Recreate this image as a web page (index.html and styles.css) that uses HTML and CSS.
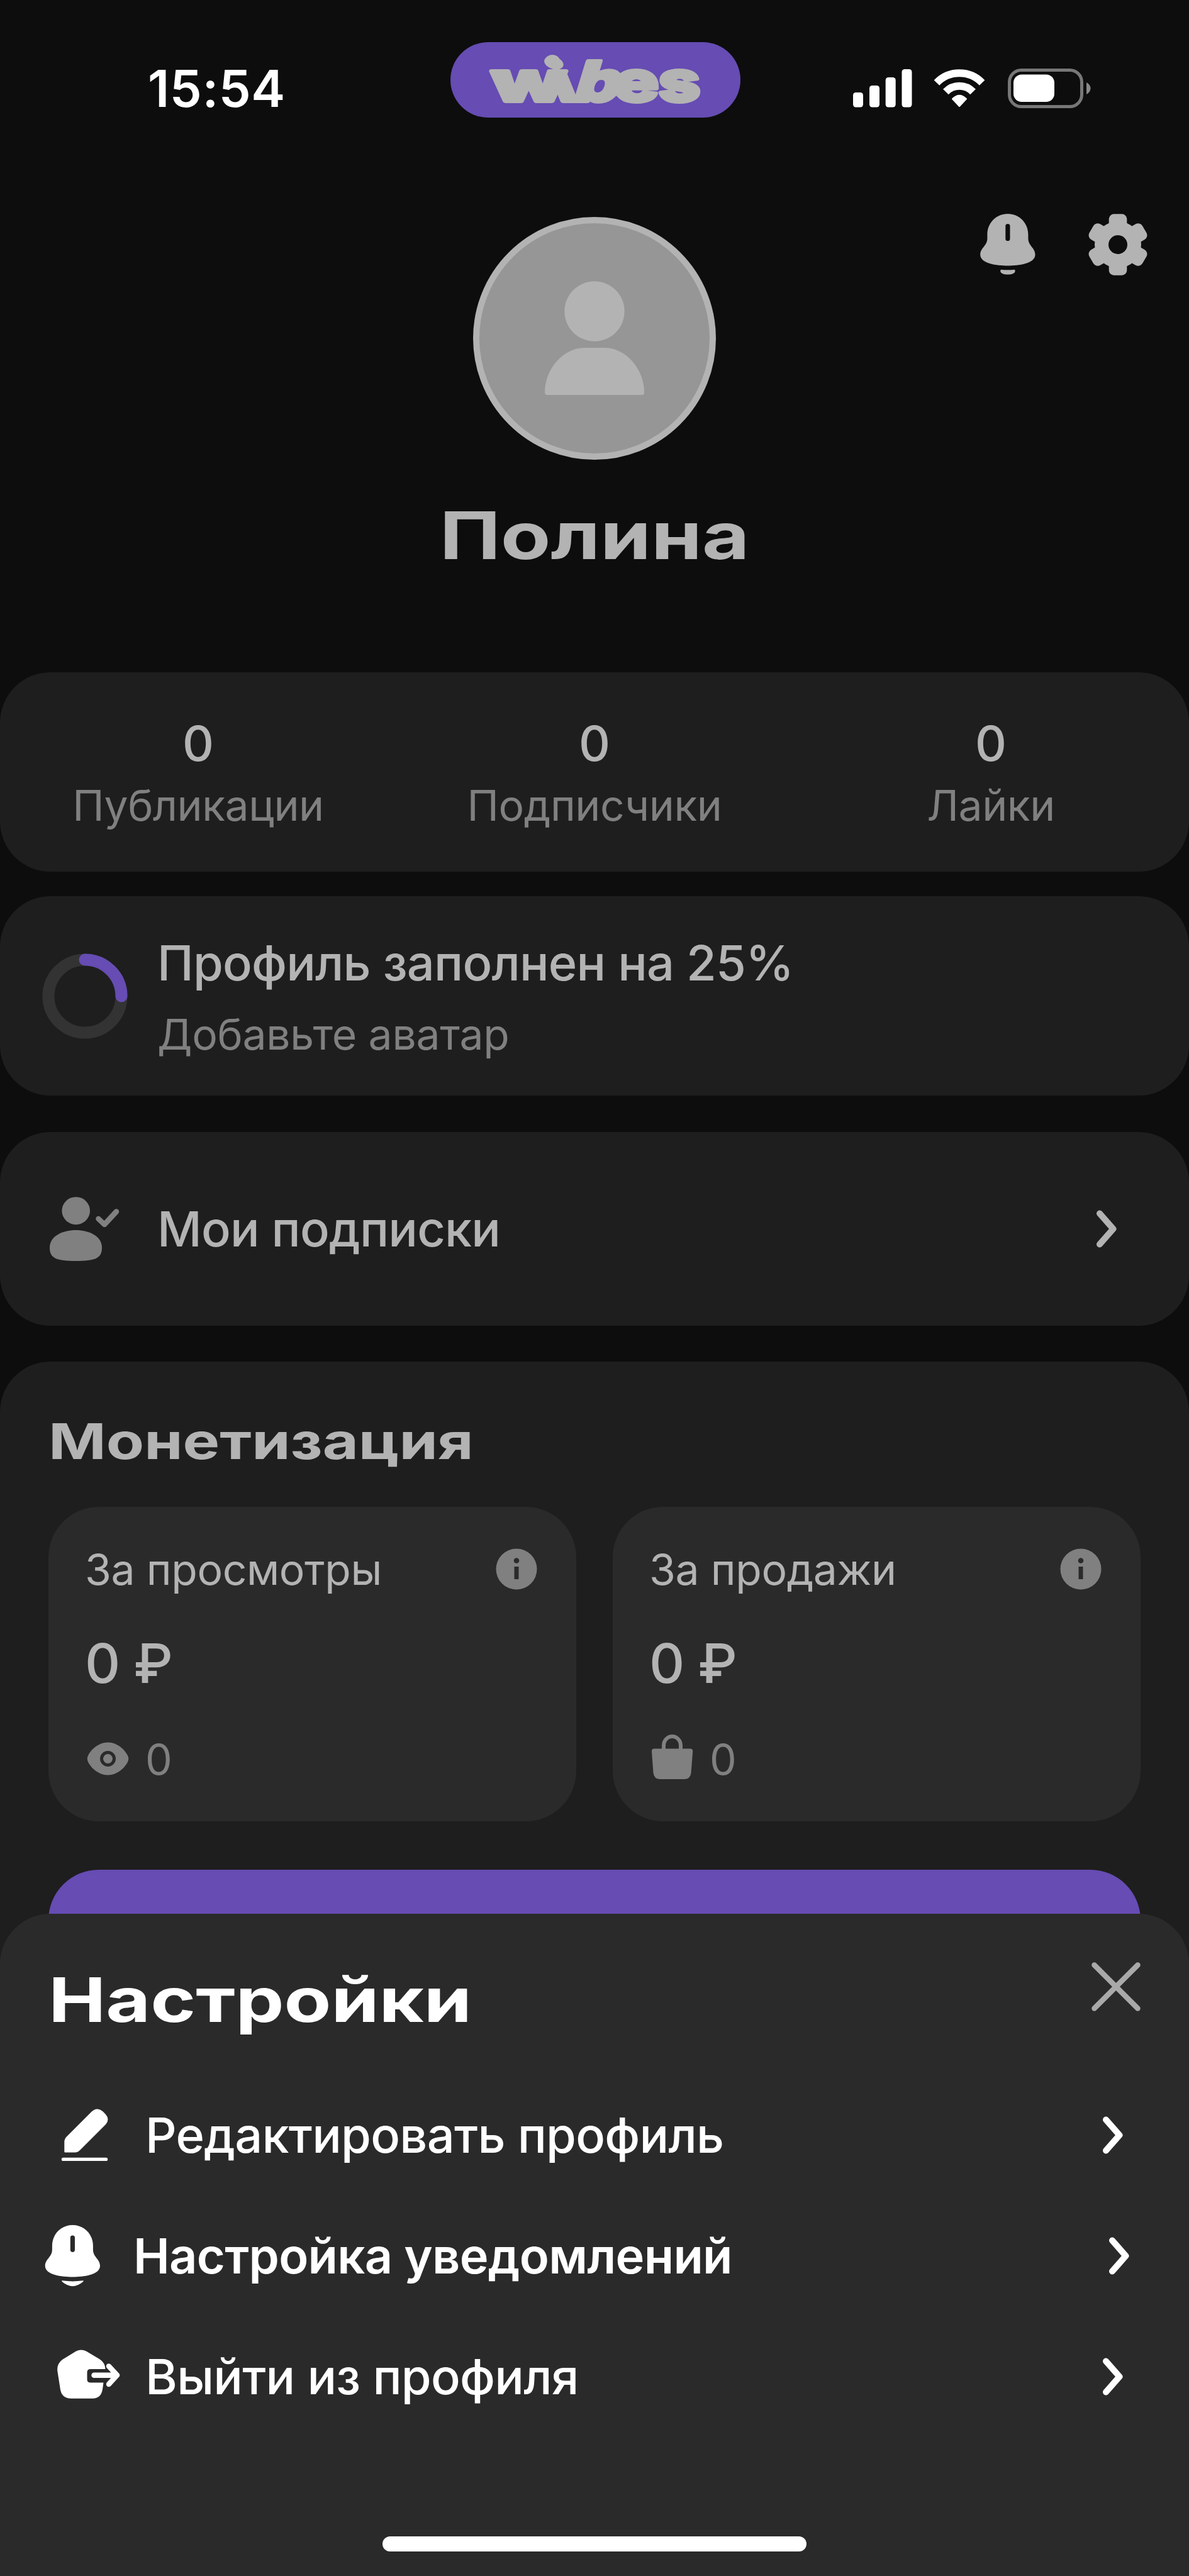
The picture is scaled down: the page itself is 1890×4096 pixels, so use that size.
FILE: index.html
```html
<!DOCTYPE html>
<html lang="ru">
<head>
    <meta charset="UTF-8">
    <meta name="viewport" content="width=device-width, initial-scale=1.0">
    <title>Wibes - Профиль</title>
    <link rel="stylesheet" href="styles.css">
</head>
<body>
    <div class="screen">
        <header class="status-bar">
            <div class="time">15:54</div>
            <div class="logo-pill">
                <svg class="logo-text" viewBox="0 0 461 120" width="461" height="120">
                    <text x="65" y="94" textLength="119" lengthAdjust="spacingAndGlyphs">w</text>
                    <text transform="translate(172 94) skewX(22)" textLength="34" lengthAdjust="spacingAndGlyphs">i</text>
                    <ellipse cx="162" cy="30" rx="9" ry="7"/>
                    <text transform="translate(193 94) skewX(-17)" textLength="72" lengthAdjust="spacingAndGlyphs">b</text>
                    <text x="259" y="94" textLength="72" lengthAdjust="spacingAndGlyphs">e</text>
                    <text x="331" y="94" textLength="66" lengthAdjust="spacingAndGlyphs">s</text>
                </svg>
            </div>
            <div class="status-icons">
                <svg class="signal" viewBox="0 0 94 61" width="94" height="61" fill="#fff">
                    <rect x="0" y="37" width="16" height="23.5" rx="4.5"/>
                    <rect x="26" y="26" width="16" height="34.5" rx="4.5"/>
                    <rect x="51.7" y="13" width="16" height="47.5" rx="4.5"/>
                    <rect x="77.5" y="0" width="16" height="60.5" rx="4.5"/>
                </svg>
                <svg class="wifi" viewBox="0 0 82 61" width="82" height="61" fill="none" stroke="#fff" stroke-width="12">
                    <path d="M4.9 21.6A50.2 50.2 0 0 1 77.1 21.6"/>
                    <path d="M19.4 36A29.8 29.8 0 0 1 62.6 36"/>
                    <path d="M30 47.2Q41 36.5 52 47.2L41 59Z" fill="#fff" stroke-width="2" stroke-linejoin="round"/>
                </svg>
                <svg class="battery" viewBox="0 0 132 63" width="132" height="63">
                    <rect x="2.5" y="2.5" width="115" height="58" rx="19" fill="none" stroke="#777" stroke-width="5"/>
                    <rect x="9" y="9.5" width="65" height="43.5" rx="13" fill="#fff"/>
                    <path d="M125 22Q131.500 25.500 131.500 31.500T125 41Z" fill="#888"/>
                </svg>
            </div>
        </header>

        <section class="profile">
            <div class="profile-actions">
                <svg viewBox="13.500 9 88 98" width="88" height="98" fill="#b3b3b3">
                    <path d="M57.400 9C39 9 24.900 23.500 24.900 42V48C24.900 60 13.700 63 13.700 74C13.700 88 40 91.500 57.400 91.500S101 88 101 74C101 63 89.900 60 89.900 48V42C89.900 23.500 75.800 9 57.400 9Z"/>
                    <path d="M47 97.800Q57.400 98.800 67.800 97.800Q69.500 97.800 69 100.500C68.500 107.300 46.300 107.300 45.800 100.500Q45.400 97.800 47 97.800Z"/>
                    <rect x="53.800" y="25" width="7.200" height="27" rx="3.600" fill="#0d0d0d"/>
                </svg>
                <svg viewBox="0 0 94 98" width="94" height="98" fill="#b3b3b3">
                    <circle cx="47" cy="49" r="37"/>
                    <rect x="32.700" y="0.300" width="28.600" height="97.400" rx="8"/>
                    <rect x="32.700" y="0.300" width="28.600" height="97.400" rx="8" transform="rotate(60 47 49)"/>
                    <rect x="32.700" y="0.300" width="28.600" height="97.400" rx="8" transform="rotate(120 47 49)"/>
                    <circle cx="47" cy="49" r="15" fill="#0d0d0d"/>
                </svg>
            </div>
            <div class="avatar">
                <svg viewBox="0 0 160 182" width="160" height="182" fill="#b3b3b3">
                    <circle cx="80" cy="48" r="47.700"/>
                    <path d="M5 181Q1 181 1 177C1 140 30 106 64 106H96C130 106 159 140 159 177Q159 181 155 181Z"/>
                </svg>
            </div>
            <h1 class="name"><span>Полина</span></h1>
        </section>

        <section class="card stats">
            <div class="stat"><b>0</b><span>Публикации</span></div>
            <div class="stat"><b>0</b><span>Подписчики</span></div>
            <div class="stat"><b>0</b><span>Лайки</span></div>
        </section>

        <section class="card progress">
            <svg class="ring" viewBox="0 0 136 136" width="136" height="136" fill="none" stroke-width="19">
                <circle cx="68" cy="68" r="58" stroke="#333"/>
                <path d="M68 10A58 58 0 0 1 126 68" stroke="#664cb3" stroke-linecap="round"/>
            </svg>
            <div class="progress-text">
                <div class="row-title">Профиль заполнен на 25%</div>
                <div class="progress-hint">Добавьте аватар</div>
            </div>
        </section>

        <section class="card subscriptions">
            <svg class="user-icon" viewBox="0 0 112 102" width="112" height="102" fill="#808080">
                <ellipse cx="41.700" cy="22.200" rx="22.300" ry="22"/>
                <path d="M41.500 53C62 53 83 62 83 81C83 98 72 102 41.500 102S0 98 0 81C0 62 21 53 41.500 53Z"/>
                <path d="M77.500 35L87 44L106 23.500" fill="none" stroke="#808080" stroke-width="8.500" stroke-linecap="round" stroke-linejoin="round"/>
            </svg>
            <div class="row-title">Мои подписки</div>
            <svg class="chevron" viewBox="0 0 34 60" width="34" height="60"><path d="M6 5.500L27.500 30L6 54.500"/></svg>
        </section>

        <section class="card money">
            <h2 class="money-title"><span>Монетизация</span></h2>
            <div class="money-grid">
                <div class="money-card">
                    <div class="money-head">
                        <span>За просмотры</span>
                        <svg viewBox="0 0 66 66" width="66" height="66"><circle cx="33" cy="33" r="32.500" fill="#808080"/><circle cx="33" cy="19.500" r="4.300" fill="#2a2a2a"/><rect x="29.500" y="29" width="7" height="20" fill="#2a2a2a"/></svg>
                    </div>
                    <div class="money-value">0 ₽</div>
                    <div class="money-foot">
                        <svg viewBox="0 0 70 78" width="70" height="78" fill="#808080">
                            <path d="M35.500 12.500C51 12.500 63 25 67 33.500Q69.500 38.500 67 43.500C63 52 51 64.500 35.500 64.500S8 52 4 43.500Q1.500 38.500 4 33.500C8 25 20 12.500 35.500 12.500Z"/>
                            <circle cx="35.500" cy="38.500" r="10" fill="#808080" stroke="#2a2a2a" stroke-width="5"/>
                        </svg>
                        <span>0</span>
                    </div>
                </div>
                <div class="money-card">
                    <div class="money-head">
                        <span>За продажи</span>
                        <svg viewBox="0 0 66 66" width="66" height="66"><circle cx="33" cy="33" r="32.500" fill="#808080"/><circle cx="33" cy="19.500" r="4.300" fill="#2a2a2a"/><rect x="29.500" y="29" width="7" height="20" fill="#2a2a2a"/></svg>
                    </div>
                    <div class="money-value">0 ₽</div>
                    <div class="money-foot">
                        <svg viewBox="0 0 70 78" width="70" height="78" fill="#808080">
                            <path d="M7 22.500H64Q68.500 22.500 68.200 27L65.500 61Q64.500 71 54 71H17Q6.500 71 5.500 61L3 27Q2.700 22.500 7 22.500Z"/>
                            <path d="M22 25V17.500A13.500 14.500 0 0 1 49 17.500V25" fill="none" stroke="#808080" stroke-width="6"/>
                        </svg>
                        <span>0</span>
                    </div>
                </div>
            </div>
            <div class="money-button"></div>
        </section>

        <section class="sheet">
            <div class="sheet-head">
                <h2 class="sheet-title"><span>Настройки</span></h2>
                <svg class="close" viewBox="0 0 78 78" width="78" height="78"><path d="M4.500 4.500L73.500 73.500M73.500 4.500L4.500 73.500"/></svg>
            </div>
            <div class="menu-item">
                <svg class="menu-icon" viewBox="0 0 116 116" width="116" height="116" fill="#fff">
                    <path d="M26.500 85.500Q25.300 85.500 25.300 84V69Q25.300 64 28.800 60.500L68.500 20.800Q77.500 12.500 86.400 20.200L91 25Q98 33 91 41L50 82Q46.500 85.500 42 85.500Z"/>
                    <rect x="20.800" y="93.700" width="73.400" height="5.400" rx="2.700"/>
                </svg>
                <span>Редактировать профиль</span>
                <svg class="chevron white" viewBox="0 0 34 60" width="34" height="60"><path d="M6 5.500L27.500 30L6 54.500"/></svg>
            </div>
            <div class="menu-item active">
                <svg class="menu-icon" viewBox="0 0 116 116" width="116" height="116" fill="#fff">
                    <path d="M57.400 9C39 9 24.900 23.500 24.900 42V48C24.900 60 13.700 63 13.700 74C13.700 88 40 91.500 57.400 91.500S101 88 101 74C101 63 89.900 60 89.900 48V42C89.900 23.500 75.800 9 57.400 9Z"/>
                    <path d="M41 97.300Q57.400 99.500 73.800 97.300Q76 97.300 73.500 99.500Q57.400 112.800 41.300 99.500Q39 97.300 41 97.300Z"/>
                    <rect x="53.800" y="25.400" width="7.200" height="26.500" rx="3.600" fill="#2a2a2a"/>
                </svg>
                <span>Настройка уведомлений</span>
                <svg class="chevron white" viewBox="0 0 34 60" width="34" height="60"><path d="M6 5.500L27.500 30L6 54.500"/></svg>
            </div>
            <div class="menu-item">
                <svg class="menu-icon" viewBox="0 0 116 116" width="116" height="116" fill="#fff">
                    <path d="M44 17.500Q52 13.500 60 17.500L81 30Q90 35.500 90.500 46H67Q61.500 46 61.500 51V62.500Q61.500 67.500 67 67.500H87.500L86 78Q84 92.700 70 92.700H36Q21.500 92.700 19 79L14.300 49Q13 38 22 31Z"/>
                    <path d="M72.500 55.700H109M96 41.500L109 55.700L96 70" fill="none" stroke="#fff" stroke-width="8.500" stroke-linecap="round" stroke-linejoin="round"/>
                </svg>
                <span>Выйти из профиля</span>
                <svg class="chevron white" viewBox="0 0 34 60" width="34" height="60"><path d="M6 5.500L27.500 30L6 54.500"/></svg>
            </div>
            <div class="home-indicator"></div>
        </section>
    </div>
</body>
</html>
```
FILE: styles.css
```css
* {
    box-sizing: border-box;
}

body {
    margin: 0;
    background-color: #0d0d0d;
    color: #b3b3b3;
    font-family: "Inter", "Noto Sans", sans-serif;
}

svg {
    display: block;
    flex-shrink: 0;
}

h1, h2 {
    margin: 0;
}

/* wide headings */
h1 span, h2 span {
    display: inline-block;
    transform-origin: left center;
    transform: scaleX(1.247);
}

.screen {
    position: relative;
    width: 1890px;
    height: 4096px;
    overflow: hidden;
}

/* status bar */
.status-bar {
    display: grid;
    grid-template-columns: 716px 461px 1fr;
    height: 187px;
    padding-top: 67px;
}

.time {
    padding: 24px 0 0 235px;
    font-size: 81px;
    font-weight: 600;
    line-height: 100px;
    letter-spacing: 0.6px;
    color: #fff;
}

.logo-pill {
    height: 120px;
    border-radius: 60px;
    background-color: #664cb3;
}

.logo-text {
    font-size: 88px;
    font-weight: 800;
    fill: #b3b3b3;
    stroke: #b3b3b3;
    stroke-width: 6px;
    stroke-linejoin: round;
}

.status-icons {
    display: flex;
    align-items: center;
    height: 61px;
    margin-top: 43px;
    padding-left: 179px;
}

.wifi {
    margin-left: 34px;
}

.battery {
    margin-left: 36px;
}

/* profile */
.profile {
    position: relative;
    height: 882px;
    padding-top: 158px;
}

.profile-actions {
    position: absolute;
    top: 153px;
    right: 66px;
    display: flex;
    gap: 84px;
}

.avatar {
    width: 386px;
    height: 386px;
    margin: 0 auto;
    padding-top: 92px;
    border: 10px solid #b3b3b3;
    border-radius: 50%;
    background-color: #969696;
}

.avatar svg {
    margin: 0 auto;
}

.name {
    margin-top: 56px;
    font-size: 104px;
    font-weight: 700;
    line-height: 128px;
    text-align: center;
}

.name span {
    transform-origin: center;
    transform: scaleX(1.25);
}

/* cards */
.card {
    border-radius: 80px;
    background-color: #1e1e1e;
}

.stats {
    display: grid;
    grid-template-columns: repeat(3, 1fr);
    height: 317px;
    padding-top: 64px;
    text-align: center;
}

.stat b,
.stat span {
    display: block;
    line-height: 98px;
}

.stat b {
    font-size: 77.5px;
    font-weight: 500;
}

.stat span {
    font-size: 67.8px;
    letter-spacing: -0.4px;
    color: #808080;
}

.progress {
    display: flex;
    align-items: center;
    height: 317px;
    margin-top: 39px;
    padding-left: 67px;
}

.progress-text {
    margin-left: 47px;
    padding-top: 8px;
    line-height: 113px;
}

.row-title {
    font-size: 77.5px;
    font-weight: 500;
    letter-spacing: -0.8px;
}

.progress-hint {
    font-size: 67.8px;
    letter-spacing: -0.3px;
    color: #808080;
}

.subscriptions {
    display: flex;
    align-items: center;
    height: 308px;
    margin-top: 58px;
    padding: 0 114px 0 79px;
}

.subscriptions .row-title {
    margin-left: 59px;
}

.chevron {
    margin-left: auto;
    fill: none;
    stroke: #b3b3b3;
    stroke-width: 10px;
    stroke-linecap: round;
    stroke-linejoin: round;
}

.chevron.white {
    stroke: #fff;
}

/* monetization */
.money {
    height: 1900px;
    margin-top: 57px;
    padding: 76px 77px 0;
}

.money-title {
    font-size: 79px;
    font-weight: 700;
    line-height: 100px;
}

.money-grid {
    display: grid;
    grid-template-columns: 1fr 1fr;
    gap: 58px;
    margin-top: 55px;
}

.money-card {
    height: 500px;
    padding: 58px 62px 0 58px;
    border-radius: 80px;
    background-color: #2a2a2a;
}

.money-head {
    display: flex;
    align-items: center;
    justify-content: space-between;
    height: 81px;
    font-size: 67.8px;
    letter-spacing: -0.4px;
}

.money-value {
    margin-top: 57px;
    font-size: 87.2px;
    font-weight: 500;
    line-height: 106px;
    letter-spacing: -1px;
}

.money-foot {
    display: flex;
    align-items: center;
    gap: 25px;
    height: 78px;
    margin-top: 60px;
    padding-left: 1px;
    font-size: 67.8px;
    color: #808080;
}

.money-button {
    height: 200px;
    margin-top: 77px;
    border-radius: 80px;
    background-color: #664cb3;
}

/* settings sheet */
.sheet {
    position: absolute;
    left: 0;
    right: 0;
    bottom: 0;
    height: 1053px;
    padding: 0 77px;
    border-radius: 80px 80px 0 0;
    background-color: #2a2a2a;
    color: #fff;
}

.sheet-head {
    display: flex;
    justify-content: space-between;
    height: 256px;
    padding-top: 77px;
}

.sheet-title {
    font-size: 98px;
    font-weight: 700;
    line-height: 120px;
}

.close {
    fill: none;
    stroke: #a9a9a9;
    stroke-width: 8.5px;
    stroke-linecap: round;
}

.menu-item {
    display: flex;
    align-items: center;
    height: 192px;
    padding-right: 27px;
    font-size: 77.5px;
    font-weight: 500;
    letter-spacing: -0.75px;
}

.menu-item span {
    margin-left: 38px;
}

.menu-item.active {
    margin: 0 -10px 0 -19px;
    font-weight: 600;
}

.home-indicator {
    width: 674px;
    height: 24px;
    margin: 158px auto 0;
    border-radius: 12px;
    background-color: #fff;
}
```
